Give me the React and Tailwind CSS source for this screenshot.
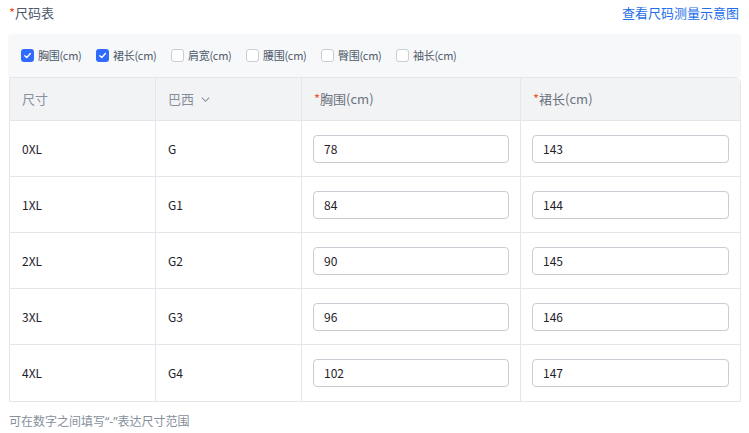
import React from "react";

const font = { fontFamily: '"Microsoft YaHei", "Noto Sans CJK SC", "Noto Sans", sans-serif' };

function Check({ checked, label }) {
  return (
    <label className="w-[75px] flex items-center gap-[4px] text-[11px] text-[#4e5969] tracking-[-0.3px]">
      {checked ? (
        <span className="shrink-0 w-[13px] h-[13px] rounded-[3px] bg-[#2f6bff] flex items-center justify-center">
          <svg width="9" height="9" viewBox="0 0 10 10" fill="none">
            <path d="M2 5.2 L4.2 7.3 L8.2 2.8" stroke="white" strokeWidth="1.5" strokeLinecap="round" strokeLinejoin="round" />
          </svg>
        </span>
      ) : (
        <span className="shrink-0 w-[13px] h-[13px] rounded-[3px] bg-white border border-[#c9cdd4]" />
      )}
      <span className="whitespace-nowrap">{label}</span>
    </label>
  );
}

const rows = [
  ["0XL", "G", "78", "143"],
  ["1XL", "G1", "84", "144"],
  ["2XL", "G2", "90", "145"],
  ["3XL", "G3", "96", "146"],
  ["4XL", "G4", "102", "147"],
];

export default function App() {
  return (
    <div className="w-[749px] h-[433px] bg-white px-[8px] pt-[3px]" style={font}>
      <div className="flex items-center justify-between h-[20px]">
        <div className="text-[13px] text-[#4e5969] pl-[1px]">
          <span className="text-[#f0561d]">*</span>尺码表
        </div>
        <a className="text-[13px] text-[#1e6ee8] pr-[2px]">查看尺码测量示意图</a>
      </div>
      <div className="mt-[11px] h-[43px] bg-[#f7f8fa] rounded-t-[4px] flex items-center pl-[13px] w-[733px]">
        <Check checked label="胸围(cm)" />
        <Check checked label="裙长(cm)" />
        <Check label="肩宽(cm)" />
        <Check label="腰围(cm)" />
        <Check label="臀围(cm)" />
        <Check label="袖长(cm)" />
      </div>
      <div className="ml-[1px] w-[732px] border border-[#e5e6eb] rounded-tr-[6px] overflow-hidden">
        <div className="grid grid-cols-[146px_146px_219px_1fr] h-[43px] bg-[#f2f3f5] text-[13px] text-[#86909c] border-b border-[#e5e6eb]">
          <div className="flex items-center pl-[12px] border-r border-[#e5e6eb]">尺寸</div>
          <div className="flex items-center pl-[12px] border-r border-[#e5e6eb] gap-[6px]">
            巴西
            <svg width="11" height="11" viewBox="0 0 12 12" fill="none">
              <path d="M2 4 L6 8 L10 4" stroke="#86909c" strokeWidth="1.1" />
            </svg>
          </div>
          <div className="flex items-center pl-[12px] border-r border-[#e5e6eb] text-[#6b7280]">
            <span className="text-[#f0561d]">*</span>胸围(cm)
          </div>
          <div className="flex items-center pl-[12px] text-[#6b7280]">
            <span className="text-[#f0561d]">*</span>裙长(cm)
          </div>
        </div>
        {rows.map((r, i) => (
          <div
            key={r[0]}
            className={
              "grid grid-cols-[146px_146px_219px_1fr] h-[56px] text-[12px] text-[#1d2129] " +
              (i < rows.length - 1 ? "border-b border-[#e5e6eb]" : "")
            }
          >
            <div className="flex items-center pl-[12px] border-r border-[#e5e6eb]">{r[0]}</div>
            <div className="flex items-center pl-[12px] border-r border-[#e5e6eb]">{r[1]}</div>
            <div className="flex items-center px-[11px] border-r border-[#e5e6eb]">
              <div className="w-full h-[28px] border border-[#c9cdd4] rounded-[4px] flex items-center pl-[10px]">{r[2]}</div>
            </div>
            <div className="flex items-center px-[11px]">
              <div className="w-full h-[28px] border border-[#c9cdd4] rounded-[4px] flex items-center pl-[10px]">{r[3]}</div>
            </div>
          </div>
        ))}
      </div>
      <div className="mt-[10px] text-[12px] text-[#86909c] pl-[1px]">
        可在数字之间填写<span style={{ fontFamily: '"Noto Sans", sans-serif' }}>“-”</span>表达尺寸范围
      </div>
    </div>
  );
}
